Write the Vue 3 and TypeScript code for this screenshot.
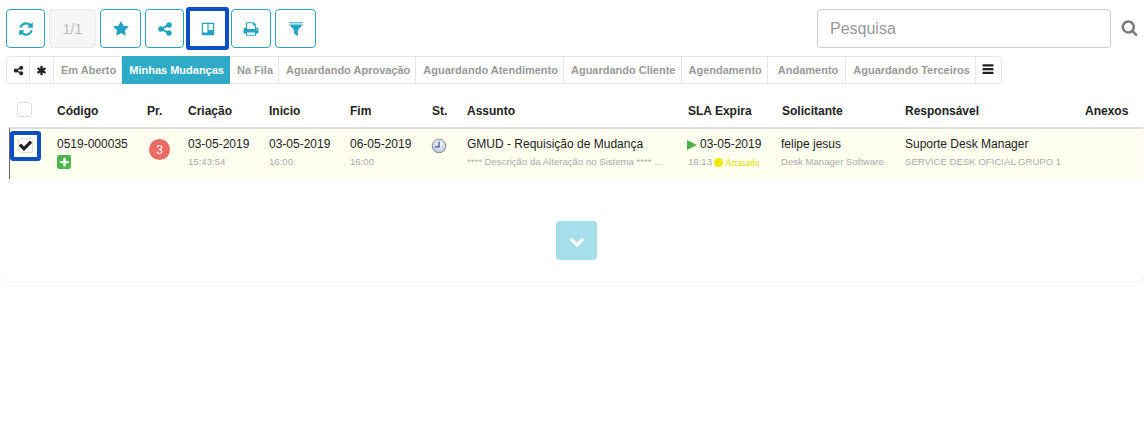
<script setup lang="ts">
const icons: Record<string, string> = {
  refresh: 'M1639 1056q0 5-1 7-64 268-268 434.5t-478 166.5q-146 0-282.5-55t-243.5-157l-129 129q-19 19-45 19t-45-19-19-45v-448q0-26 19-45t45-19h448q26 0 45 19t19 45-19 45l-137 137q71 66 161 102t187 36q134 0 250-65t186-179q11-17 53-117 8-23 30-23h192q13 0 22.500 9.500t9.500 22.500zm25-800v448q0 26-19 45t-45 19h-448q-26 0-45-19t-19-45 19-45l138-138q-148-137-349-137-134 0-250 65t-186 179q-11 17-53 117-8 23-30 23h-199q-13 0-22.500-9.500t-9.500-22.500v-7q65-268 270-434.500t480-166.500q146 0 284 55.500t245 156.500l130-129q19-19 45-19t45 19 19 45z',
  star: 'M1728 647q0 22-26 48l-363 354 86 500q1 7 1 20 0 21-10.500 35.500t-30.500 14.500q-19 0-40-12l-449-236-449 236q-22 12-40 12-21 0-31.500-14.500t-10.500-35.500q0-6 2-20l86-500-364-354q-25-27-25-48 0-37 56-46l502-73 225-455q19-41 49-41t49 41l225 455 502 73q56 9 56 46z',
  share: 'M1344 1024q133 0 226.500 93.500t93.500 226.500-93.500 226.500-226.500 93.500-226.500-93.500-93.500-226.500q0-12 2-34l-360-180q-92 86-218 86-133 0-226.500-93.500t-93.500-226.500 93.500-226.500 226.500-93.500q126 0 218 86l360-180q-2-22-2-34 0-133 93.500-226.500t226.500-93.500 226.500 93.500 93.500 226.500-93.500 226.500-226.500 93.500q-126 0-218-86l-360 180q2 22 2 34t-2 34l360 180q92-86 218-86z',
  trello: 'M200 200H1592V1592H200ZM330 340V1300H830V340ZM960 340V1000H1460V340Z',
  print: 'M448 1536h896v-256h-896v256zm0-640h896v-384h-160q-40 0-68-28t-28-68v-160h-640v640zm1152 64q0-26-19-45t-45-19-45 19-19 45 19 45 45 19 45-19 19-45zm128 0v416q0 13-9.500 22.500t-22.500 9.500h-224v160q0 40-28 68t-68 28h-960q-40 0-68-28t-28-68v-160h-224q-13 0-22.500-9.500t-9.500-22.500v-416q0-79 56.500-135.500t135.500-56.500h64v-544q0-40 28-68t68-28h672q40 0 88 20t76 48l152 152q28 28 48 76t20 88v256h64q79 0 135.500 56.500t56.500 135.500z',
  filter: 'M130 130H1662V260H130ZM130 380H1662L1110 1000V1700L682 1400V1000Z',
  search: 'M1216 832q0-185-131.500-316.500t-316.500-131.500-316.500 131.500-131.500 316.500 131.500 316.500 316.500 131.500 316.500-131.500 131.500-316.500zm512 832q0 52-38 90t-90 38q-54 0-90-38l-343-342q-179 124-399 124-143 0-273.500-55.500t-225-150-150-225-55.500-273.500 55.500-273.500 150-225 225-150 273.500-55.500 273.500 55.500 225 150 150 225 55.500 273.500q0 220-124 399l343 343q37 37 37 90z',
  check: 'M1671 566q0 40-28 68l-724 724-136 136q-28 28-68 28t-68-28l-136-136-362-362q-28-28-28-68t28-68l136-136q28-28 68-28t68 28l294 295 656-657q28-28 68-28t68 28l136 136q28 28 28 68z',
  chevron: 'M1683 808l-742 741q-19 19-45 19t-45-19l-742-741q-19-19-19-45.500t19-45.500l166-165q19-19 45-19t45 19l531 531 531-531q19-19 45-19t45 19l166 165q19 19 19 45.500t-19 45.500z',
  asterisk: 'M1546 1050q46 26 59.500 77.500t-12.500 97.500l-64 110q-26 46-77.500 59.500t-97.500-12.500l-266-153v307q0 52-38 90t-90 38h-128q-52 0-90-38t-38-90v-307l-266 153q-46 26-97.500 12.500t-77.500-59.500l-64-110q-26-46-12.500-97.500t59.500-77.500l266-154-266-154q-46-26-59.500-77.500t12.500-97.500l64-110q26-46 77.500-59.500t97.500 12.500l266 153v-307q0-52 38-90t90-38h128q52 0 90 38t38 90v307l266-153q46-26 97.500-12.500t77.500 59.500l64 110q26 46 12.500 97.500t-59.500 77.500l-266 154z',
  bars: 'M200 280H1592V560H200ZM200 760H1592V1040H200ZM200 1240H1592V1520H200Z',
  plus: 'M1600 736v192q0 40-28 68t-68 28h-416v416q0 40-28 68t-68 28h-192q-40 0-68-28t-28-68v-416h-416q-40 0-68-28t-28-68v-192q0-40 28-68t68-28h416v-416q0-40 28-68t68-28h192q40 0 68 28t28 68v416h416q40 0 68 28t28 68z',
}

const tools = ['star', 'share', 'trello', 'print', 'filter']

const tabs = [
  { label: 'Em Aberto', cls: '' },
  { label: 'Minhas Mudanças', cls: 'active' },
  { label: 'Na Fila', cls: '' },
  { label: 'Aguardando Aprovação', cls: '' },
  { label: 'Aguardando Atendimento', cls: '' },
  { label: 'Aguardando Cliente', cls: '' },
  { label: 'Agendamento', cls: '' },
  { label: 'Andamento', cls: 'wide' },
  { label: 'Aguardando Terceiros', cls: '' },
]

const headers = ['Código', 'Pr.', 'Criação', 'Inicio', 'Fim', 'St.', 'Assunto', 'SLA Expira', 'Solicitante', 'Responsável', 'Anexos']
</script>

<template>
  <div class="page">
    <div class="toolbar">
      <button class="tool"><svg viewBox="0 0 1792 1792" class="ic16"><path :d="icons.refresh" /></svg></button>
      <button class="tool pager" disabled>1/1</button>
      <button v-for="t in tools" :key="t" class="tool" :class="t">
        <svg viewBox="0 0 1792 1792" class="ic16"><path :d="icons[t]" /></svg>
      </button>
      <div class="search">
        <input class="search-input" placeholder="Pesquisa" />
        <svg viewBox="0 0 1792 1792" class="search-icon"><path :d="icons.search" /></svg>
      </div>
    </div>

    <div class="tabs">
      <div class="tab icon-tab"><svg viewBox="0 0 1792 1792" class="ic11"><path :d="icons.share" /></svg></div>
      <div class="tab icon-tab second"><svg viewBox="0 0 1792 1792" class="ic11"><path :d="icons.asterisk" /></svg></div>
      <div v-for="t in tabs" :key="t.label" class="tab" :class="t.cls">{{ t.label }}</div>
      <div class="tab icon-tab last"><svg viewBox="0 0 1792 1792" class="ic13"><path :d="icons.bars" /></svg></div>
    </div>

    <div class="grid head">
      <div class="cell-check"><span class="box head-box"></span></div>
      <div v-for="h in headers" :key="h">{{ h }}</div>
    </div>

    <div class="grid row">
      <div class="cell-check">
        <span class="box row-box"><svg viewBox="0 0 1792 1792" class="check"><path :d="icons.check" /></svg></span>
      </div>
      <div>
        <div class="main">0519-000035</div>
        <span class="plus"><svg viewBox="0 0 1792 1792"><path :d="icons.plus" /></svg></span>
      </div>
      <div><span class="prio">3</span></div>
      <div><div class="main">03-05-2019</div><div class="sub">15:43:54</div></div>
      <div><div class="main">03-05-2019</div><div class="sub">16:00</div></div>
      <div><div class="main">06-05-2019</div><div class="sub">16:00</div></div>
      <div>
        <svg viewBox="0 0 16 16" class="clock">
          <defs>
            <radialGradient id="clockface" cx="50%" cy="35%" r="65%">
              <stop offset="0" stop-color="#ffffff" />
              <stop offset="1" stop-color="#b4bed6" />
            </radialGradient>
          </defs>
          <circle cx="8" cy="8" r="6.800" fill="url(#clockface)" stroke="#8a8f9c" stroke-width="1" />
          <path d="M8 3.500V8.800H4" fill="none" stroke="#2f4fa8" stroke-width="1.300" />
        </svg>
      </div>
      <div><div class="main">GMUD - Requisição de Mudança</div><div class="sub">**** Descrição da Alteração no Sistema **** ...</div></div>
      <div>
        <div class="main sla"><span class="tri"></span>03-05-2019</div>
        <div class="sub sla-sub">16:13<span class="dot"></span><span class="late">Atrasado</span></div>
      </div>
      <div class="requester"><div class="main">felipe jesus</div><div class="sub">Desk Manager Software</div></div>
      <div><div class="main">Suporte Desk Manager</div><div class="sub">SERVICE DESK OFICIAL GRUPO 1</div></div>
      <div></div>
    </div>

    <div class="more">
      <button class="more-btn"><svg viewBox="0 0 1792 1792"><path :d="icons.chevron" /></svg></button>
    </div>
    <div class="rule"></div>
  </div>
</template>

<style scoped>
.page {
  padding: 9px 4px 0 6px;
  font-family: "Liberation Sans", Arial, sans-serif;
  color: #222;
  font-size: 12px;
}
.toolbar {
  display: flex;
  gap: 4px;
  height: 39px;
}
.tool {
  box-sizing: border-box;
  width: 39px;
  height: 39px;
  padding: 0;
  display: flex;
  align-items: center;
  justify-content: center;
  background: #fff;
  border: 1px solid #2aa5c0;
  border-radius: 4px;
  color: #22a3c4;
  position: relative;
}
.tool svg { fill: currentColor; display: block; }
.ic16 { width: 16px; height: 16px; }
.pager {
  width: 47px;
  background: #f5f5f5;
  border-color: #e8e8e8;
  color: #b9b9b9;
  font: 14px "Liberation Sans", Arial, sans-serif;
}
.star { width: 41px; }
.print { width: 40px; }
.filter { width: 41px; }
.trello::after {
  content: "";
  position: absolute;
  inset: -3px;
  border: 4px solid #0d50c6;
  border-radius: 3px;
}
.search {
  margin-left: auto;
  display: flex;
  align-items: center;
  gap: 11px;
  padding-right: 5px;
}
.search-input {
  box-sizing: border-box;
  width: 294px;
  height: 39px;
  padding: 0 12px;
  border: 1px solid #ccc;
  border-radius: 4px;
  font: 16px "Liberation Sans", Arial, sans-serif;
  color: #555;
  outline: none;
}
.search-input::placeholder { color: #999; opacity: 1; }
.search-icon { width: 17px; height: 17px; fill: #777; margin: -3px 0 0 -1px; }
.tabs {
  display: inline-flex;
  margin-top: 8px;
  height: 28px;
  box-sizing: border-box;
  border: 1px solid #e7e7e7;
  border-radius: 4px;
  vertical-align: top;
}
.tab {
  box-sizing: border-box;
  display: flex;
  align-items: center;
  padding: 0 5px 0 7px;
  border-right: 1px solid #e7e7e7;
  font-size: 11px;
  font-weight: 700;
  color: #999;
  white-space: nowrap;
}
.tab.active {
  background: #2fabc8;
  color: #fff;
  border-right-color: #2fabc8;
  margin: -1px 0;
}
.tab.wide { padding: 0 7px 0 10px; }
.icon-tab { width: 23px; justify-content: center; padding: 0; }
.icon-tab.second { width: 24px; }
.icon-tab.last { width: 25px; border-right: 0; }
.icon-tab svg { fill: #222; display: block; }
.ic11 { width: 11px; height: 11px; }
.ic13 { width: 14px; height: 14px; margin-top: -2px; }
.grid {
  display: grid;
  grid-template-columns: 48px 90px 41px 81px 81px 82px 35px 221px 94px 123px 180px 58px;
  margin-left: 3px;
}
.head {
  height: 32px;
  margin-top: 11px;
  align-items: center;
  font-weight: 700;
  color: #222;
}
.cell-check { position: relative; }
.box {
  box-sizing: border-box;
  display: block;
  width: 15px;
  height: 15px;
  margin-left: 8px;
  border: 1px solid #ddd;
  border-radius: 3px;
  background: #fff;
}
.head-box { margin-bottom: 3px; }
.row {
  border-top: 2px solid #dedede;
  border-left: 1px solid #666;
  margin-left: 3px;
  height: 52px;
  box-sizing: border-box;
  background: #fffff0;
  padding-top: 7px;
  grid-template-columns: 47px 90px 41px 81px 81px 82px 35px 221px 94px 123px 180px 58px;
}
.row-box {
  position: relative;
  margin: 2px 0 0 8px;
  display: flex;
  align-items: center;
  justify-content: center;
}
.row-box::after {
  content: "";
  position: absolute;
  left: -9px;
  top: -8px;
  width: 23px;
  height: 22px;
  border: 4px solid #0d50c6;
  border-radius: 3px;
}
.check { width: 15px; height: 15px; fill: #222; flex: none; }
.main { font-size: 12px; line-height: 17px; color: #222; white-space: nowrap; }
.sub { font-size: 9.600px; line-height: 14px; margin-top: 2px; color: #aaa; white-space: nowrap; }
.requester { margin-left: -1px; }
.plus {
  display: flex;
  align-items: center;
  justify-content: center;
  width: 14px;
  height: 14px;
  margin-top: 2px;
  border-radius: 2px;
  background: #4cb84c;
}
.plus svg { width: 11px; height: 11px; fill: #fff; display: block; }
.prio {
  display: flex;
  align-items: center;
  justify-content: center;
  width: 21px;
  height: 21px;
  margin: 3px 0 0 2px;
  border-radius: 50%;
  background: #ec6a63;
  color: #fff;
  font-size: 12px;
}
.clock { width: 16px; height: 16px; display: block; margin: 2px 0 0 -1px; }
.sla { display: flex; align-items: center; gap: 3px; margin-left: -1px; }
.tri {
  width: 0;
  height: 0;
  border-style: solid;
  border-width: 5.500px 0 5.500px 10px;
  border-color: transparent transparent transparent #4fb04f;
}
.sla-sub { display: flex; align-items: center; }
.dot {
  width: 9px;
  height: 9px;
  margin: 0 2px 0 2px;
  border-radius: 50%;
  background: #f0e800;
}
.late { font: 9.600px "Liberation Serif", serif; color: #e8e000; }
.more {
  display: flex;
  justify-content: center;
  margin-top: 42px;
  padding-left: 4px;
}
.more-btn {
  width: 41px;
  height: 39px;
  padding: 0;
  border: 0;
  border-radius: 4px;
  background: #a5dfec;
  display: flex;
  align-items: center;
  justify-content: center;
}
.more-btn svg { width: 16px; height: 16px; fill: #fff; display: block; }
.rule {
  box-sizing: border-box;
  margin: 17px -1px 0 0;
  height: 6px;
  border: 1px solid #f2f2f2;
  border-top: 0;
  border-radius: 0 0 4px 4px;
}
</style>
